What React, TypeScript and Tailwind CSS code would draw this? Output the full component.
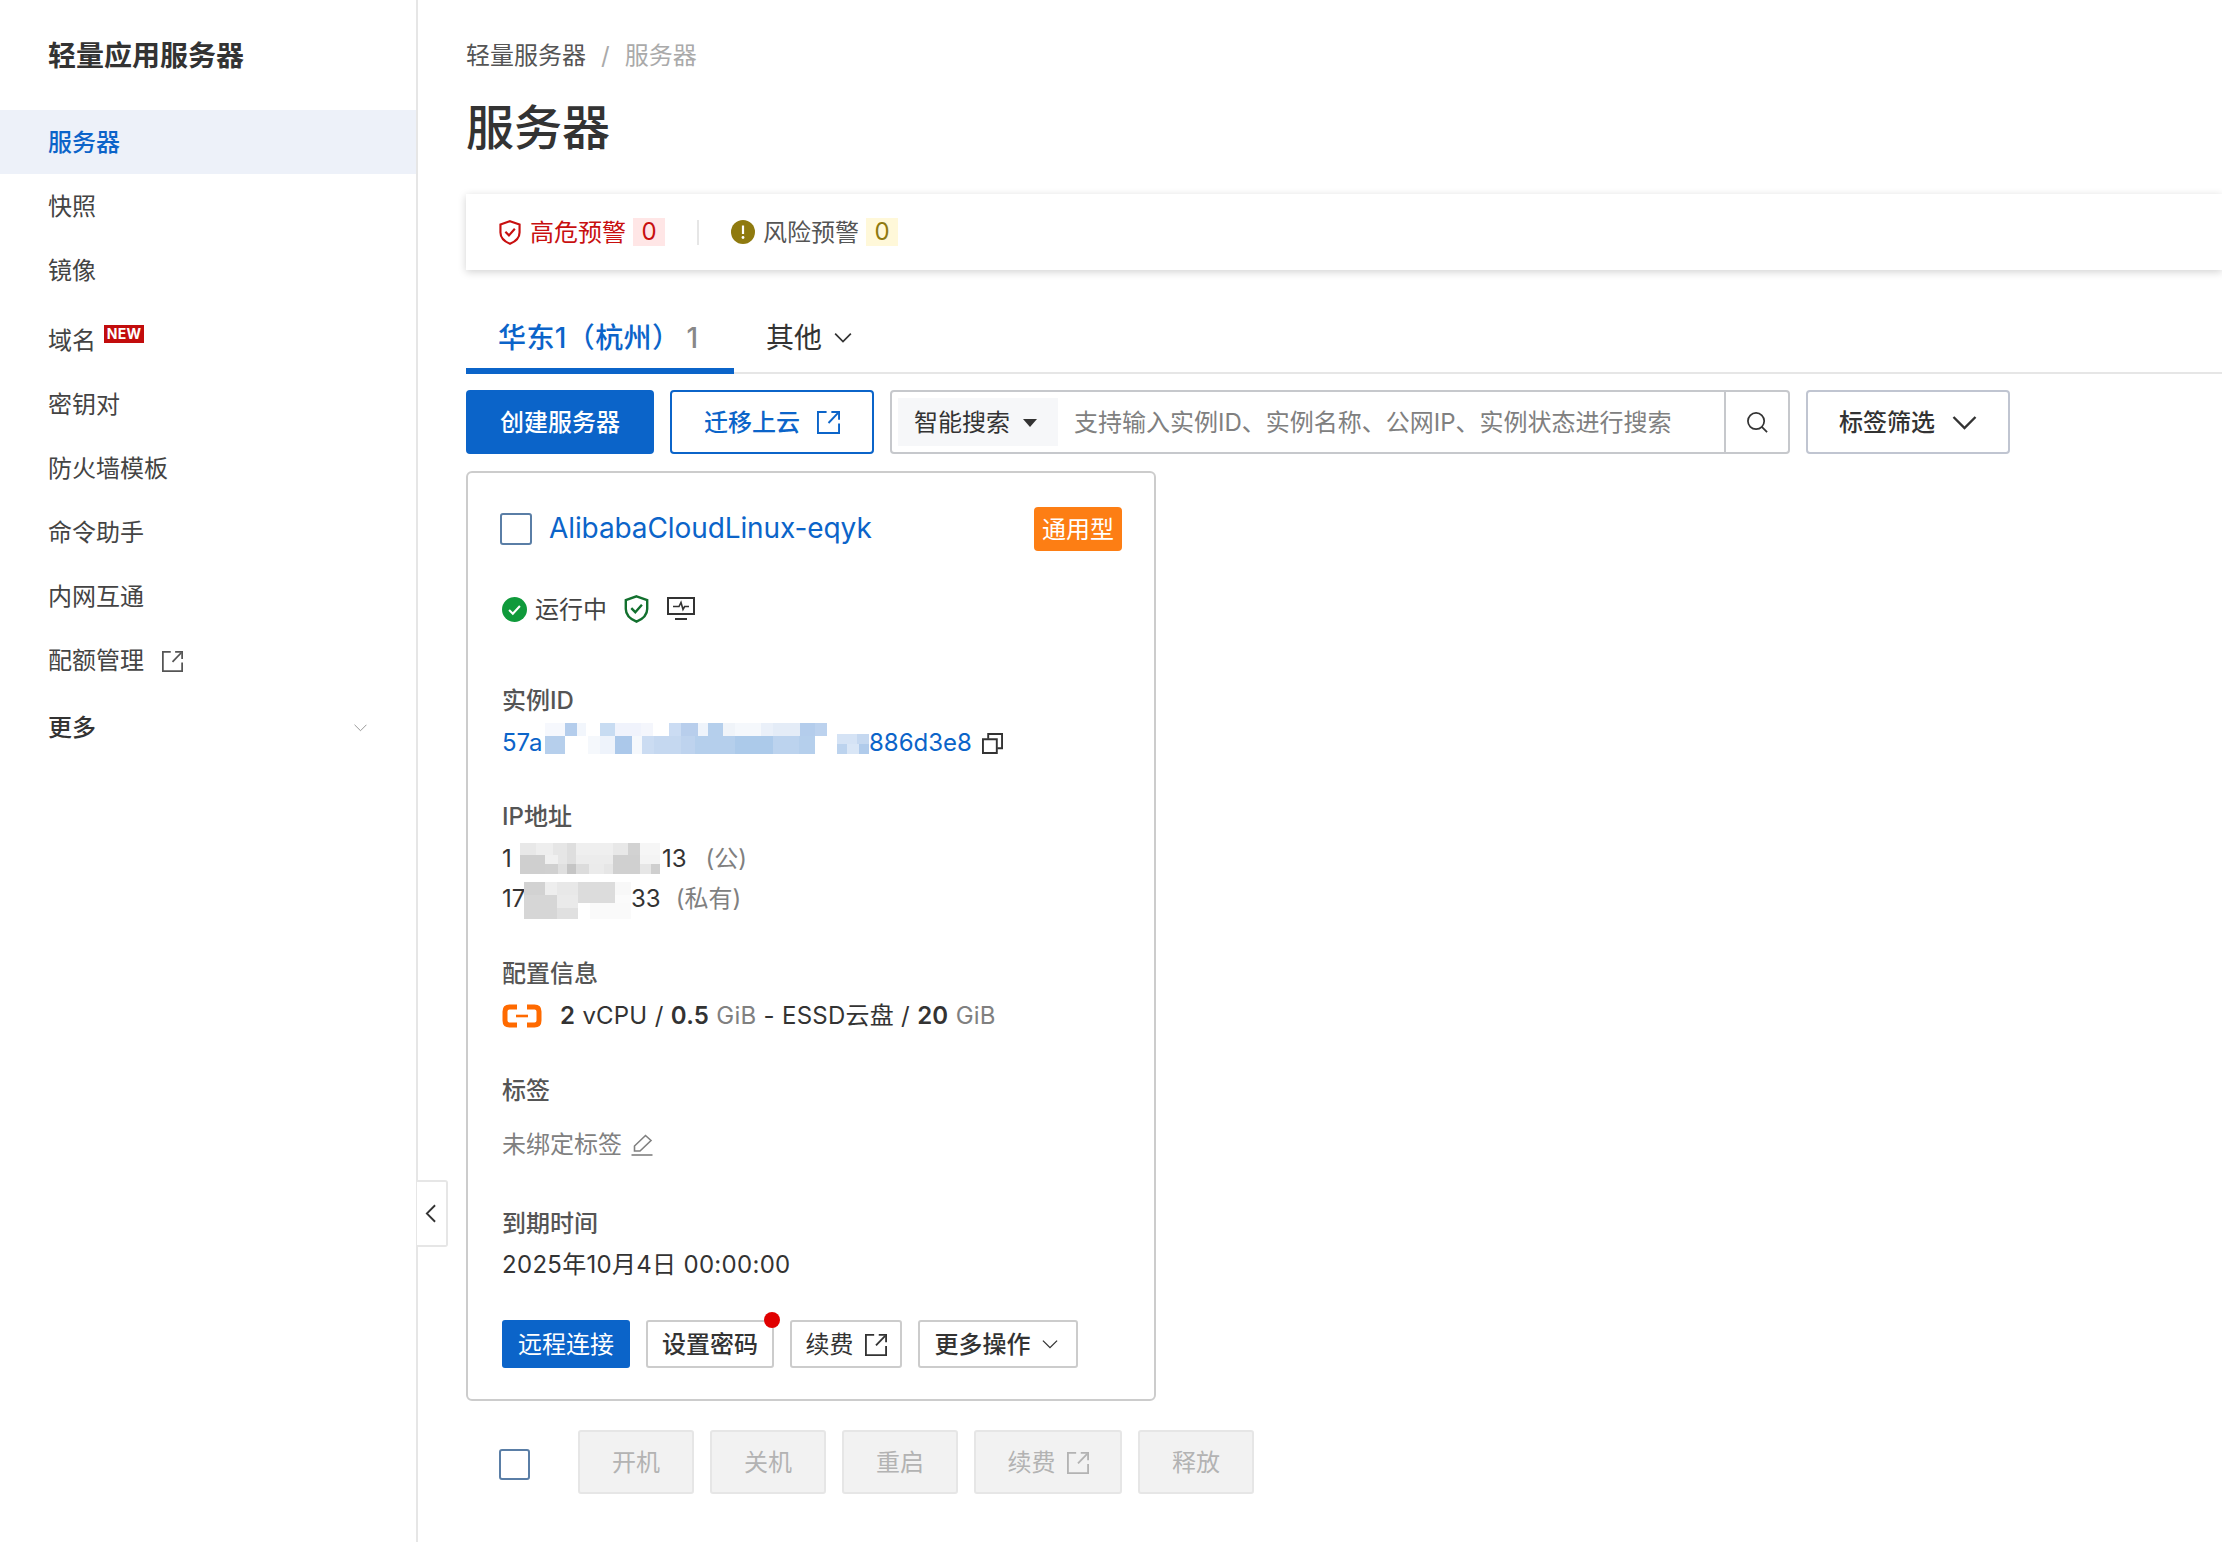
import React from "react";

type Rect = [number, number, number, number, string];

const idMosaic: Rect[] = [
  [14, 12, 58, 38, "#f6f8fd"], [72, 12, 36, 38, "#b4cdec"], [108, 12, 27, 38, "#f2f6fc"], [177, 12, 45, 38, "#c8dcf2"],
  [222, 12, 78, 38, "#f0f3fc"], [300, 12, 38, 38, "#f4f6fc"], [384, 12, 36, 38, "#cbdcf3"], [420, 12, 51, 38, "#b8ceec"],
  [471, 12, 30, 38, "#eff4fb"], [501, 12, 45, 38, "#b5cfec"], [546, 12, 36, 38, "#f0f4f9"], [582, 12, 78, 38, "#f5f8fc"],
  [660, 12, 36, 38, "#eaf0f9"], [696, 12, 81, 38, "#e4ecf7"], [777, 12, 45, 38, "#b4cdec"], [822, 12, 36, 38, "#bcd2ee"],
  [14, 50, 58, 55, "#b6cfec"], [141, 50, 36, 55, "#f5f8fc"], [177, 50, 45, 55, "#eef3fb"], [222, 50, 51, 55, "#abc8ea"],
  [273, 50, 30, 55, "#f5f8fc"], [303, 50, 36, 55, "#cbdcf2"], [339, 50, 81, 55, "#c5d8f0"], [420, 50, 42, 55, "#bed3ee"],
  [462, 50, 120, 55, "#b5cfec"], [582, 50, 114, 55, "#accaea"], [696, 50, 78, 55, "#bcd3ee"], [774, 50, 48, 55, "#b5cfec"],
  [888, 45, 62, 30, "#d5e3f5"], [950, 45, 35, 30, "#c5d8f0"], [888, 75, 30, 30, "#bcd3ee"], [918, 75, 36, 30, "#d9e6f6"],
  [954, 75, 31, 30, "#b0cbeb"],
];

const ipOne: Rect[] = [
  [60, 18, 48, 35, "#e8e8e8"], [108, 18, 52, 35, "#eeeeee"], [160, 18, 42, 35, "#e6e6e6"], [202, 18, 26, 35, "#dedede"],
  [228, 18, 112, 35, "#efefef"], [340, 18, 44, 35, "#e8e8e8"], [384, 18, 36, 35, "#d2d2d2"], [420, 18, 60, 35, "#f6f6f6"],
  [60, 53, 75, 27, "#cfcfcf"], [135, 53, 40, 27, "#f0f0f0"], [175, 53, 27, 27, "#e6e6e6"], [202, 53, 26, 27, "#dedede"],
  [228, 53, 112, 27, "#ececec"], [340, 53, 80, 27, "#d0d0d0"], [420, 53, 60, 27, "#f4f4f4"],
  [60, 80, 75, 30, "#cfcfcf"], [135, 80, 40, 30, "#d0d0d0"], [175, 80, 27, 30, "#dfdfdf"], [202, 80, 26, 30, "#c5c5c5"],
  [228, 80, 39, 30, "#dcdcdc"], [267, 80, 45, 30, "#ebebeb"], [312, 80, 26, 30, "#e6e6e6"], [338, 80, 82, 30, "#d0d0d0"],
  [420, 80, 33, 30, "#e6e6e6"], [453, 80, 27, 30, "#cfcfcf"],
];

const ipTwo: Rect[] = [
  [72, 147, 63, 39, "#d2d2d2"], [135, 147, 36, 39, "#eeeeee"], [171, 147, 63, 39, "#e8e8e8"], [234, 147, 111, 39, "#dcdcdc"],
  [345, 147, 48, 39, "#f8f8f8"], [72, 186, 99, 72, "#d6d6d6"], [171, 186, 63, 39, "#eaeaea"], [234, 186, 111, 24, "#dcdcdc"],
  [345, 186, 48, 24, "#fbfbfb"], [270, 210, 123, 48, "#fafafa"], [234, 210, 36, 48, "#ffffff"], [171, 225, 63, 33, "#e0e0e0"],
];

function Mosaic({ rects, box, className }: { rects: Rect[]; box: string; className: string }) {
  return (
    <svg viewBox={box} className={className} shapeRendering="crispEdges" aria-hidden="true">
      {rects.map((r, i) => (
        <rect key={i} x={r[0]} y={r[1]} width={r[2]} height={r[3]} fill={r[4]} />
      ))}
    </svg>
  );
}

function ExternalIcon({ className }: { className: string }) {
  return (
    <svg viewBox="0 0 24 24" fill="none" stroke="currentColor" strokeWidth="2" className={className} aria-hidden="true">
      <path d="M10 1H1v22h22V13" />
      <path d="M12 12.500 22 2" />
      <path d="M15 1h8v8" />
    </svg>
  );
}

function Chevron({ className, width = 2 }: { className: string; width?: number }) {
  return (
    <svg viewBox="0 0 24 14" fill="none" stroke="currentColor" strokeWidth={width} className={className} aria-hidden="true">
      <path d="M1 1l11 11L23 1" />
    </svg>
  );
}

function Shield({ className }: { className: string }) {
  return (
    <svg viewBox="0 0 24 28" fill="none" stroke="currentColor" strokeWidth="2.4" className={className} aria-hidden="true">
      <path d="M12 1.300 22.700 5V14c0 5.800-4.300 10-10.700 12.700C5.600 24 1.300 19.800 1.300 14V5L12 1.300Z" />
      <path d="M6.800 13.200l4 4 6.600-7.400" />
    </svg>
  );
}

const menu = ["快照", "镜像"];
const menu2 = ["密钥对", "防火墙模板", "命令助手", "内网互通"];

function Sidebar() {
  return (
    <aside className="w-[418px] h-full shrink-0 border-r-2 border-[#e6e6e6] pt-[36px]">
      <div className="pl-[48px] h-[40px] leading-[40px] text-[28px] font-semibold text-[#333333]">轻量应用服务器</div>
      <nav className="mt-[34px] text-[24px] text-[#444444]">
        <div className="h-[64px] pl-[48px] pt-[2px] flex items-center bg-[#edf1f9] text-[#0b64c9] font-medium">服务器</div>
        {menu.map((m) => (
          <div key={m} className="h-[64px] pl-[48px] pt-[2px] flex items-center">{m}</div>
        ))}
        <div className="h-[71px] pl-[48px] flex items-center pt-[6px]">
          <span>域名</span>
          <span className="ml-[8px] mb-[14px] h-[18px] w-[40px] bg-[#c20c0c] text-white text-[14px] leading-[18px] font-bold text-center tracking-[0.2px]">NEW</span>
        </div>
        {menu2.map((m) => (
          <div key={m} className="h-[64px] pl-[48px] flex items-center">{m}</div>
        ))}
        <div className="h-[64px] pl-[48px] flex items-center">
          配额管理
          <ExternalIcon className="ml-[18px] w-[21px] h-[21px] text-[#555555]" />
        </div>
        <div className="h-[68px] pl-[48px] pr-[49px] pt-[2px] flex items-center justify-between font-medium text-[#333333]">
          更多
          <Chevron width={1.6} className="w-[13px] h-[8px] text-[#888888]" />
        </div>
      </nav>
    </aside>
  );
}

function Toolbar() {
  return (
    <div className="mt-[16px] flex h-[64px] text-[24px]">
      <button className="w-[188px] rounded-[4px] bg-[#0b64c9] text-white font-medium pt-[1px]">创建服务器</button>
      <button className="ml-[16px] w-[204px] rounded-[4px] border-2 border-[#0b64c9] text-[#0b64c9] flex items-center justify-center font-medium pt-[1px]">
        迁移上云
        <ExternalIcon className="ml-[17px] w-[23px] h-[23px]" />
      </button>
      <div className="ml-[16px] w-[900px] flex border-2 border-[#c6c8cc] rounded-[4px] items-center">
        <div className="ml-[6px] w-[160px] h-[48px] bg-[#f6f7f9] flex items-center pl-[16px] pt-[1px] text-[#333333]">
          智能搜索
          <span className="ml-[13px] border-x-[7px] border-x-transparent border-t-[8px] border-t-[#333333]" />
        </div>
        <div className="ml-[16px] flex-1 pt-[1px] text-[#808080] whitespace-nowrap">支持输入实例ID、实例名称、公网IP、实例状态进行搜索</div>
        <div className="w-[64px] h-full border-l-2 border-[#c6c8cc] flex items-center justify-center">
          <svg viewBox="0 0 24 24" fill="none" stroke="#333333" strokeWidth="1.8" className="w-[23px] h-[23px]" aria-hidden="true">
            <circle cx="10.500" cy="10.500" r="8.500" />
            <path d="M16.500 16.500 22 22" />
          </svg>
        </div>
      </div>
      <button className="ml-[16px] w-[204px] border-2 border-[#c0c5d1] rounded-[4px] flex items-center justify-center text-[#333333] font-medium pt-[1px]">
        标签筛选
        <Chevron width={2.4} className="ml-[17px] w-[25px] h-[14px]" />
      </button>
    </div>
  );
}

function Label({ children, className }: { children: React.ReactNode; className: string }) {
  return <div className={`h-[32px] leading-[34px] text-[#555555] font-medium ${className}`}>{children}</div>;
}

function ServerCard() {
  return (
    <section className="mt-[17px] w-[690px] h-[930px] border-2 border-[#cccccc] rounded-[6px] pt-[34px] pl-[34px] pr-[32px] text-[24px] text-[#333333]">
      <div className="h-[44px] flex items-center -ml-[2px]">
        <span className="w-[32px] h-[32px] rounded-[3px] border-2 border-[#5a7ea6] bg-white" />
        <span className="ml-[17px] text-[28px] text-[#0b64c9] leading-[36px] tracking-[-0.1px] -mt-[2px]">AlibabaCloudLinux-eqyk</span>
        <span className="ml-auto w-[88px] h-[44px] rounded-[4px] bg-[#fd7e14] text-white pt-[2px] flex items-center justify-center">通用型</span>
      </div>
      <div className="mt-[42px] h-[32px] flex items-center">
        <svg viewBox="0 0 24 24" className="w-[25px] h-[25px]" aria-hidden="true">
          <circle cx="12" cy="12" r="12" fill="#0f9a3b" />
          <path d="M6.800 12.400l3.600 3.600 6.800-7.400" fill="none" stroke="#ffffff" strokeWidth="2" />
        </svg>
        <span className="ml-[8px] pt-[2px] text-[#444444]">运行中</span>
        <Shield className="ml-[17px] w-[25px] h-[28px] text-[#12702e]" />
        <svg viewBox="0 0 28 24" fill="none" stroke="#333333" strokeWidth="2" className="ml-[18px] w-[28px] h-[24px]" aria-hidden="true">
          <path d="M1 1h26v16H1z" />
          <path d="M6 9.500h6l2-4 2 7 1.600-3H22" strokeWidth="1.600" />
          <path d="M8 22h12" />
        </svg>
      </div>
      <Label className="mt-[59px]">实例ID</Label>
      <div className="mt-[11px] h-[32px] flex items-center text-[#0b64c9]">
        <span className="w-[43px]">57a</span>
        <Mosaic rects={idMosaic} box="14 12 971 93" className="w-[324px] h-[31px] -mt-[10px] shrink-0" />
        <span>886d3e8</span>
        <svg viewBox="0 0 22 22" fill="none" stroke="#333333" strokeWidth="2" className="ml-[10px] w-[21px] h-[21px]" aria-hidden="true">
          <path d="M1 6.500h14.500V21H1z" />
          <path d="M6.500 6V1H21v15h-5" />
        </svg>
      </div>
      <Label className="mt-[41px]">IP地址</Label>
      <div className="mt-[11px] h-[32px] flex items-center">
        <span className="w-[18px]">1</span>
        <Mosaic rects={ipOne} box="60 18 420 92" className="w-[140px] h-[31px] -mt-[2px] shrink-0" />
        <span className="ml-[2px]">13</span>
        <span className="ml-[19px] text-[#808080]">(公)</span>
      </div>
      <div className="mt-[8px] h-[32px] flex items-center">
        <span className="w-[22px] whitespace-nowrap">17</span>
        <Mosaic rects={ipTwo} box="72 147 321 111" className="w-[107px] h-[37px] mt-[2px] shrink-0" />
        <span>33</span>
        <span className="ml-[15px] text-[#808080]">(私有)</span>
      </div>
      <Label className="mt-[42px]">配置信息</Label>
      <div className="mt-[11px] h-[32px] flex items-center">
        <svg viewBox="0 0 40 24" fill="none" stroke="#ff6a00" className="w-[40px] h-[24px]" aria-hidden="true">
          <path d="M15 3H7.500Q3 3 3 7.500V16.500Q3 21 7.500 21H15" strokeWidth="5" />
          <path d="M25 3H32.500Q37 3 37 7.500V16.500Q37 21 32.500 21H25" strokeWidth="5" />
          <path d="M14 12H26" strokeWidth="2.600" />
        </svg>
        <span className="ml-[18px] whitespace-pre tracking-[0.2px] [word-spacing:0.3px]">
          <b className="font-semibold">2</b> vCPU / <b className="font-semibold">0.5</b> <span className="text-[#808080]">GiB</span> - ESSD云盘 / <b className="font-semibold">20</b> <span className="text-[#808080]">GiB</span>
        </span>
      </div>
      <Label className="mt-[42px]">标签</Label>
      <div className="mt-[23px] h-[32px] flex items-center text-[#808080]">
        未绑定标签
        <svg viewBox="0 0 22 22" fill="none" stroke="#808080" strokeWidth="1.600" className="ml-[9px] w-[22px] h-[22px]" aria-hidden="true">
          <path d="M14.500 1.500 20 6.500 9 17H3.500V12L14.500 1.500Z" />
          <path d="M0.500 21H21.500" />
        </svg>
      </div>
      <Label className="mt-[46px]">到期时间</Label>
      <div className="mt-[10px] h-[32px] leading-[32px] tracking-[0.3px]">2025年10月4日 00:00:00</div>
      <div className="mt-[39px] h-[48px] flex">
        <button className="w-[128px] rounded-[3px] bg-[#0b64c9] text-white pt-[1px]">远程连接</button>
        <button className="relative ml-[16px] w-[128px] rounded-[3px] border-2 border-[#cccccc] font-medium pt-[1px]">
          设置密码
          <span className="absolute -right-[8px] -top-[10px] w-[16px] h-[16px] rounded-full bg-[#e00000]" />
        </button>
        <button className="ml-[16px] w-[112px] rounded-[3px] border-2 border-[#cccccc] flex items-center justify-center pt-[1px]">
          续费
          <ExternalIcon className="ml-[11px] w-[22px] h-[22px]" />
        </button>
        <button className="ml-[16px] w-[160px] rounded-[3px] border-2 border-[#cccccc] flex items-center justify-center font-medium pt-[1px] pr-[4px]">
          更多操作
          <Chevron className="ml-[11px] w-[16px] h-[9px]" />
        </button>
      </div>
    </section>
  );
}

function BottomBar() {
  const disabled = "h-[64px] rounded-[3px] border-2 border-[#e6e6e6] bg-[#f2f2f2] text-[#b3b3b3] flex items-center justify-center pt-[1px]";
  return (
    <div className="mt-[29px] h-[64px] flex items-center text-[24px]">
      <span className="ml-[33px] mt-[5px] w-[31px] h-[31px] rounded-[3px] border-2 border-[#5a7ea6] bg-white" />
      <button className={`ml-[48px] w-[116px] ${disabled}`}>开机</button>
      <button className={`ml-[16px] w-[116px] ${disabled}`}>关机</button>
      <button className={`ml-[16px] w-[116px] ${disabled}`}>重启</button>
      <button className={`ml-[16px] w-[148px] ${disabled}`}>
        续费
        <ExternalIcon className="ml-[11px] w-[22px] h-[22px]" />
      </button>
      <button className={`ml-[16px] w-[116px] ${disabled}`}>释放</button>
    </div>
  );
}

export default function App() {
  return (
    <div className="relative w-[2222px] h-[1542px] overflow-hidden bg-white flex [font-family:Inter,'Noto_Sans_CJK_SC',sans-serif]">
      <Sidebar />
      <main className="flex-1 min-w-0 pl-[48px] pt-[39px]">
        <div className="h-[32px] leading-[34px] text-[24px] text-[#555555] flex">
          轻量服务器
          <span className="mx-[15px] text-[#aaaaaa]">/</span>
          <span className="text-[#aaaaaa]">服务器</span>
        </div>
        <h1 className="mt-[24px] h-[64px] leading-[65px] text-[48px] font-medium text-[#333333]">服务器</h1>
        <div className="mt-[35px] h-[76px] bg-white shadow-[0_2px_8px_rgba(0,0,0,0.18)] flex items-center pl-[33px] text-[24px]">
          <Shield className="w-[22px] h-[25px] text-[#c80f0f]" />
          <span className="ml-[9px] pt-[2px] text-[#c80f0f]">高危预警</span>
          <span className="ml-[7px] w-[32px] h-[28px] bg-[#ffe6e6] text-[#c80f0f] flex items-center justify-center">0</span>
          <span className="ml-[32px] w-[2px] h-[25px] bg-[#e6e6e6]" />
          <svg viewBox="0 0 24 24" className="ml-[32px] w-[24px] h-[24px]" aria-hidden="true">
            <circle cx="12" cy="12" r="12" fill="#8f7a0f" />
            <path d="M12 5.500V14" stroke="#ffffff" strokeWidth="2.200" />
            <circle cx="12" cy="17.500" r="1.400" fill="#ffffff" />
          </svg>
          <span className="ml-[8px] pt-[2px] text-[#555555]">风险预警</span>
          <span className="ml-[7px] w-[32px] h-[28px] bg-[#fff8d9] text-[#8f7a0f] flex items-center justify-center">0</span>
        </div>
        <div className="mt-[32px] h-[72px] border-b-2 border-[#e6e6e6] flex text-[28px]">
          <div className="w-[268px] h-[72px] border-b-[6px] border-[#0b64c9] pl-[32px] pt-[5px] flex items-center text-[#0b64c9] font-medium tracking-[0.4px]">
            华东1（杭州）
            <span className="ml-[6px] text-[#888888] font-medium">1</span>
          </div>
          <div className="ml-[32px] h-[70px] pt-[2px] flex items-center text-[#333333]">
            其他
            <Chevron width={2.4} className="ml-[12px] w-[18px] h-[10px]" />
          </div>
        </div>
        <Toolbar />
        <ServerCard />
        <BottomBar />
      </main>
      <button className="absolute left-[417px] top-[1180px] w-[31px] h-[67px] bg-white border-2 border-l-0 border-[#e6e6e6] rounded-r-[3px] flex items-center justify-center pr-[2px]">
        <svg viewBox="0 0 12 20" fill="none" stroke="#333333" strokeWidth="2" className="w-[11px] h-[19px]" aria-hidden="true">
          <path d="M11 1 2 10l9 9" />
        </svg>
      </button>
    </div>
  );
}
